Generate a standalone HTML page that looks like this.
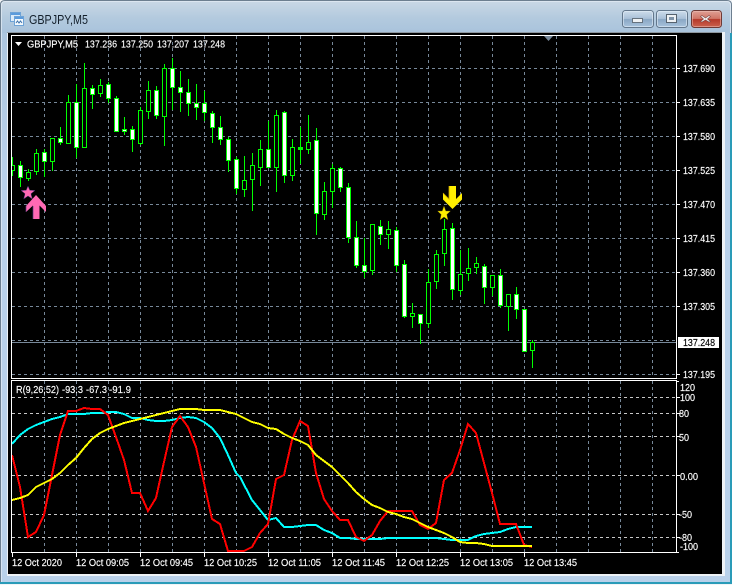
<!DOCTYPE html>
<html lang="en">
<head>
<meta charset="utf-8">
<title>GBPJPY,M5</title>
<style>
html,body{margin:0;padding:0;width:732px;height:585px;overflow:hidden;background:#f2f4f6}
svg{position:absolute;left:0;top:0;display:block}
text{font-family:"Liberation Sans",sans-serif;font-size:10.2px}
</style>
</head>
<body>
<svg width="732" height="585" viewBox="0 0 732 585" xmlns="http://www.w3.org/2000/svg">
<defs>
<linearGradient id="tb" x1="0" y1="0" x2="0" y2="1"><stop offset="0" stop-color="#cbd9e6"/><stop offset=".55" stop-color="#b3cade"/><stop offset="1" stop-color="#a9c3dc"/></linearGradient>
<linearGradient id="side" x1="0" y1="0" x2="0" y2="1"><stop offset="0" stop-color="#a9c3dc"/><stop offset=".3" stop-color="#b9d1ea"/><stop offset="1" stop-color="#b9d1ea"/></linearGradient>
<linearGradient id="btn" x1="0" y1="0" x2="0" y2="1"><stop offset="0" stop-color="#cfdeec"/><stop offset=".48" stop-color="#a9c0d8"/><stop offset=".52" stop-color="#8aa7c4"/><stop offset="1" stop-color="#a9c4de"/></linearGradient>
<linearGradient id="cls" x1="0" y1="0" x2="0" y2="1"><stop offset="0" stop-color="#e0a297"/><stop offset=".48" stop-color="#cf7566"/><stop offset=".52" stop-color="#b5392a"/><stop offset="1" stop-color="#cc6450"/></linearGradient>
<clipPath id="mainc"><rect x="12" y="36" width="664" height="342"/></clipPath>
<clipPath id="subc"><rect x="12" y="381" width="664" height="171"/></clipPath>
</defs>

<!-- window frame -->
<path d="M0 583V5Q0 0 5 0H727Q732 0 732 5V583Z" fill="url(#side)"/>
<path d="M0 33V5Q0 0 5 0H727Q732 0 732 5V33Z" fill="url(#tb)"/>
<path d="M.5 583V5Q.5 .5 5 .5H727Q731.5 .5 731.5 5V583" fill="none" stroke="#6d7f90"/>
<path d="M1.5 583V5Q1.5 1.5 5 1.5H727Q730.5 1.5 730.5 5V583" fill="none" stroke="#e4edf5" stroke-opacity=".7"/>
<rect x="0" y="582" width="732" height="2" fill="#2a9bb8"/>
<rect x="730" y="33" width="2" height="550" fill="#2a9bb8"/>
<rect x="0" y="584" width="732" height="1" fill="#f2f4f6"/>
<rect x="7" y="32" width="718" height="544" fill="#eef2f6"/>
<rect x="7" y="32" width="715" height="1" fill="#8e979f"/>
<rect x="8" y="33" width="714" height="541" fill="#000"/>

<!-- title icon -->
<g shape-rendering="crispEdges">
<rect x="10.5" y="12.5" width="10" height="9" fill="#dcebf9" stroke="#6fa3d6"/>
<rect x="11" y="13" width="9" height="2" fill="#5b9bdc"/>
<rect x="14.5" y="16.5" width="9" height="9" fill="#f4f9fd" stroke="#6fa3d6"/>
<rect x="15" y="17" width="8" height="2" fill="#5b9bdc"/>
</g>
<path d="M16 23l1.500-2 1.500 2 1.500-2 1.500 2" fill="none" stroke="#3f74ad" stroke-width="1"/>
<text x="29" y="24" style="font-size:12.5px" textLength="59" lengthAdjust="spacingAndGlyphs" fill="#14202c">GBPJPY,M5</text>

<!-- window buttons -->
<rect x="622.5" y="10.5" width="31" height="17" rx="3" fill="url(#btn)" stroke="#63778c"/>
<rect x="623.5" y="11.5" width="29" height="15" rx="2" fill="none" stroke="#e3edf6" stroke-opacity=".6"/>
<rect x="632.5" y="18.5" width="10" height="4" fill="#eef1f4" stroke="#66727e"/>
<rect x="656.5" y="10.5" width="31" height="17" rx="3" fill="url(#btn)" stroke="#63778c"/>
<rect x="657.5" y="11.5" width="29" height="15" rx="2" fill="none" stroke="#e3edf6" stroke-opacity=".6"/>
<rect x="666.5" y="14.5" width="10" height="8" fill="#eef1f4" stroke="#56626e"/>
<rect x="669" y="17" width="5" height="3" fill="#7f93a8"/>
<rect x="691.5" y="10.5" width="30" height="17" rx="3" fill="url(#cls)" stroke="#6e3a36"/>
<rect x="692.5" y="11.5" width="28" height="15" rx="2" fill="none" stroke="#f0c4bb" stroke-opacity=".5"/>
<path d="M702 15.500l3.500 2.500 3.500-2.500 1.500 1-3 2.500 3 2.500-1.500 .5-3.500-2-3.500 2-1.500-.5 3-2.500-3-2.500z" fill="#f2f2f2" stroke="#7c4a48" stroke-width=".6"/>

<!-- main grid -->
<g shape-rendering="crispEdges" stroke="#778899" stroke-dasharray="3 3" fill="none">
<path d="M12 68.500H676M12 102.500H676M12 136.500H676M12 170.500H676M12 204.500H676M12 238.500H676M12 272.500H676M12 306.500H676M12 340.500H676M12 374.500H676"/>
<path d="M44.500 36V378M76.500 36V378M108.500 36V378M140.500 36V378M172.500 36V378M204.500 36V378M236.500 36V378M268.500 36V378M300.500 36V378M332.500 36V378M364.500 36V378M396.500 36V378M428.500 36V378M460.500 36V378M492.500 36V378M524.500 36V378M556.500 36V378M588.500 36V378M620.500 36V378M652.500 36V378"/>
</g>
<rect x="12" y="342" width="664" height="1" fill="#778899"/>

<!-- candles -->
<g clip-path="url(#mainc)" shape-rendering="crispEdges" fill="none">
<path stroke="#00ff00" d="M12.500 157V176M20.500 161V187M28.500 169V181M36.500 149V175M44.500 149V177M52.500 138V171M60.500 127V145M68.500 95V143M76.500 84V158M84.500 63V147M92.500 85V109M100.500 79V97M108.500 82V103M116.500 96V132M124.500 117V135M132.500 126V152M140.500 107V145M148.500 81V119M156.500 86V119M164.500 64V146M172.500 58V110M180.500 71V112M188.500 79V116M196.500 84V120M204.500 91V121M212.500 111V143M220.500 116V145M228.500 137V172M236.500 157V194M244.500 156V197M252.500 153V211M260.500 140V186M268.500 121V167M276.500 110V192M284.500 111V183M292.500 139V181M300.500 127V164M308.500 115V154M316.500 128V235M324.500 182V220M332.500 164V208M340.500 167V192M348.500 183V243M356.500 221V268M364.500 238V278M372.500 224V275M380.500 220V245M388.500 221V249M396.500 227V272M404.500 260V318M412.500 303V328M420.500 314V344M428.500 269V328M436.500 250V289M444.500 219V266M452.500 223V300M460.500 250V295M468.500 248V281M476.500 257V274M484.500 264V304M492.500 275V296M500.500 269V308M508.500 294V331M516.500 287V319M524.500 309V351M532.500 340V368"/>
<path stroke="#00ff00" fill="#000" d="M10.500 165.500h4v5h-4zM26.500 172.500h4v6h-4zM34.500 153.500h4v18h-4zM50.500 138.500h4v23h-4zM66.500 102.500h4v41h-4zM82.500 88.500h4v59h-4zM98.500 85.500h4v8h-4zM138.500 110.500h4v33h-4zM146.500 90.500h4v21h-4zM162.500 68.500h4v48h-4zM242.500 180.500h4v9h-4zM250.500 165.500h4v14h-4zM258.500 149.500h4v18h-4zM274.500 115.500h4v52h-4zM290.500 147.500h4v28h-4zM306.500 142.500h4v7h-4zM322.500 191.500h4v23h-4zM330.500 168.500h4v23h-4zM370.500 224.500h4v46h-4zM386.500 229.500h4v5h-4zM410.500 313.500h4v3h-4zM426.500 282.500h4v41h-4zM434.500 254.500h4v27h-4zM442.500 229.500h4v24h-4zM458.500 274.500h4v16h-4zM466.500 268.500h4v5h-4zM474.500 263.500h4v4h-4zM490.500 275.500h4v12h-4zM506.500 294.500h4v12h-4zM530.500 342.500h4v8h-4z"/>
<path stroke="#00ff00" fill="#fff" d="M18.500 165.500h4v12h-4zM42.500 152.500h4v9h-4zM58.500 138.500h4v4h-4zM74.500 102.500h4v45h-4zM90.500 88.500h4v6h-4zM106.500 84.500h4v14h-4zM114.500 98.500h4v33h-4zM122.500 129.500h4v2h-4zM130.500 129.500h4v10h-4zM154.500 90.500h4v25h-4zM170.500 68.500h4v19h-4zM178.500 87.500h4v5h-4zM186.500 92.500h4v11h-4zM194.500 103.500h4v4h-4zM202.500 103.500h4v9h-4zM210.500 113.500h4v14h-4zM218.500 127.500h4v12h-4zM226.500 139.500h4v21h-4zM234.500 159.500h4v29h-4zM266.500 149.500h4v18h-4zM282.500 112.500h4v63h-4zM314.500 140.500h4v73h-4zM338.500 168.500h4v19h-4zM346.500 187.500h4v50h-4zM354.500 237.500h4v28h-4zM362.500 265.500h4v6h-4zM378.500 226.500h4v8h-4zM394.500 230.500h4v35h-4zM402.500 264.500h4v52h-4zM418.500 314.500h4v9h-4zM450.500 228.500h4v61h-4zM482.500 266.500h4v21h-4zM498.500 275.500h4v30h-4zM514.500 294.500h4v15h-4zM522.500 309.500h4v42h-4z"/>
<path stroke="#00ff00" fill="#00ff00" d="M298.500 147.500h4v2h-4z"/>
</g>

<!-- markers -->
<polygon points="28,186 29.800,190.200 35,190.500 31,193.700 32.300,199 28,196 23.700,199 25,193.700 21,190.500 26.200,190.200" fill="#ff69b4" stroke="#3a2a70" stroke-width=".5"/>
<polygon points="36,195 46,206 46,212 39.500,205.500 39.500,219 33,219 33,205.500 26,212 26,206" fill="#ff69b4"/>
<path d="M26 206V212M33 206V219" stroke="#5a3a80" stroke-width=".7" fill="none"/>
<polygon points="444,206 445.800,211 450.500,211 446.800,214.500 448,220 444,217 440,220 441.200,214.500 437.500,211 442.200,211" fill="#ffee00" stroke="#6b5c00" stroke-width=".4"/>
<polygon points="449,186 456,186 456,199 462,193 462,199.500 452.500,209 443,199.500 443,193 449,199" fill="#ffee00"/>
<path d="M449 186V199L443 193" fill="none" stroke="#c8a000" stroke-width=".8"/>
<polygon points="544,36 553,36 548.500,41" fill="#778899"/>

<!-- sub grid -->
<g shape-rendering="crispEdges" fill="none" stroke-dasharray="3 3">
<path stroke="#778899" d="M44.500 381V552M76.500 381V552M108.500 381V552M140.500 381V552M172.500 381V552M204.500 381V552M236.500 381V552M268.500 381V552M300.500 381V552M332.500 381V552M364.500 381V552M396.500 381V552M428.500 381V552M460.500 381V552M492.500 381V552M524.500 381V552M556.500 381V552M588.500 381V552M620.500 381V552M652.500 381V552"/>
<path stroke="#c8c8c8" d="M12 397.500H676M12 413.500H676M12 436.500H676M12 475.500H676M12 514.500H676M12 537.500H676"/>
</g>

<!-- indicator lines -->
<g clip-path="url(#subc)" fill="none" stroke-width="2" shape-rendering="crispEdges" stroke-linejoin="miter">
<polyline stroke="#00ffff" points="12,444 20,435 28,429 36,425 44,422 52,419 60,417 68,414 76,414 84,414 92,413 100,413 108,412 116,412 124,414 132,418 140,418 148,420 156,421 164,421 172,420 180,418 188,417 196,418 204,422 212,428 220,438 228,455 236,473 240,477 252,500 260,510 268,520 276,518 284,527 292,527 300,526 308,525 316,525 324,530 332,533 340,538 348,538 356,539 364,539 372,539 380,539 388,538 396,538 404,538 412,538 420,538 428,538 436,538 444,539 452,540 460,540 468,540 476,536 484,534 492,533 500,532 508,529 516,527 524,527 532,527"/>
<polyline stroke="#ff0000" points="12,455 20,487 28,537 36,532 44,515 52,475 60,435 68,411 76,411 84,408 92,409 100,409 108,415 116,437 124,460 132,493 140,493 148,511 156,498 164,462 172,427 180,416 188,427 196,447 204,483 212,519 220,524 228,551 236,551 244,551 252,547 260,533 268,524 276,479 284,475 292,440 300,421 308,426 316,473 324,499 332,511 340,520 348,520 356,537 364,541 372,535 380,521 388,511 396,511 404,511 412,511 420,525 428,529 436,523 444,480 452,473 460,450 468,424 476,433 484,463 492,493 500,524 508,524 516,524 524,545 532,547"/>
<polyline stroke="#ffff00" points="12,500 20,498 28,495 36,487 44,483 52,479 60,473 68,465 76,458 84,448 92,439 100,433 108,429 116,426 124,423 132,421 140,419 148,417 156,415 164,413 172,411 180,409 188,409 196,409 204,410 212,410 220,410 228,412 236,414 244,418 252,422 260,424 268,428 276,429 284,434 292,438 300,441 308,445 316,455 324,461 332,467 340,475 348,483 356,492 364,499 372,505 380,508 388,512 396,514 404,517 412,519 420,523 428,527 436,530 444,533 452,537 460,542 468,543 476,543 484,544 492,546 500,546 508,546 516,546 524,546 532,546"/>
</g>

<!-- frames and ticks -->
<g shape-rendering="crispEdges" fill="none" stroke="#fff">
<path d="M11.500 35.500H676.500V378.500H11.500Z"/>
<path d="M11.500 380.500H676.500V552.500H11.500Z"/>
<path d="M677 68.500H680M677 102.500H680M677 136.500H680M677 170.500H680M677 204.500H680M677 238.500H680M677 272.500H680M677 306.500H680M677 374.500H680"/>
<path d="M677 381.500H679M677 397.500H680M677 413.500H680M677 436.500H680M677 475.500H680M677 514.500H680M677 537.500H680M677 552.500H679"/>
<path d="M12.500 553V557M76.500 553V557M140.500 553V557M204.500 553V557M268.500 553V557M332.500 553V557M396.500 553V557M460.500 553V557M524.500 553V557"/>
</g>

<!-- header -->
<polygon points="15,42 22,42 18.500,46" fill="#fff"/>
<g fill="#fff" stroke="#fff" stroke-width=".15">
<text x="27" y="47.500" textLength="51" lengthAdjust="spacingAndGlyphs">GBPJPY,M5</text>
<text x="85" y="47.500" textLength="32" lengthAdjust="spacingAndGlyphs">137.236</text>
<text x="121" y="47.500" textLength="32" lengthAdjust="spacingAndGlyphs">137.250</text>
<text x="157" y="47.500" textLength="32" lengthAdjust="spacingAndGlyphs">137.207</text>
<text x="193" y="47.500" textLength="32" lengthAdjust="spacingAndGlyphs">137.248</text>
<!-- price axis -->
<text x="683" y="72" textLength="32" lengthAdjust="spacingAndGlyphs">137.690</text>
<text x="683" y="106" textLength="32" lengthAdjust="spacingAndGlyphs">137.635</text>
<text x="683" y="140" textLength="32" lengthAdjust="spacingAndGlyphs">137.580</text>
<text x="683" y="174" textLength="32" lengthAdjust="spacingAndGlyphs">137.525</text>
<text x="683" y="208" textLength="32" lengthAdjust="spacingAndGlyphs">137.470</text>
<text x="683" y="242" textLength="32" lengthAdjust="spacingAndGlyphs">137.415</text>
<text x="683" y="276" textLength="32" lengthAdjust="spacingAndGlyphs">137.360</text>
<text x="683" y="310" textLength="32" lengthAdjust="spacingAndGlyphs">137.305</text>
<text x="683" y="378" textLength="32" lengthAdjust="spacingAndGlyphs">137.195</text>
</g>
<rect x="678" y="337" width="41" height="11" fill="#fff"/>
<text x="683" y="346" textLength="32" lengthAdjust="spacingAndGlyphs" fill="#000" stroke="#000" stroke-width=".15">137.248</text>

<!-- indicator labels -->
<g fill="#fff" stroke="#fff" stroke-width=".15">
<text x="16" y="393" textLength="43" lengthAdjust="spacingAndGlyphs">R(9,26,52)</text>
<text x="62" y="393" textLength="21" lengthAdjust="spacingAndGlyphs">-93.3</text>
<text x="86" y="393" textLength="21" lengthAdjust="spacingAndGlyphs">-67.3</text>
<text x="109" y="393" textLength="22" lengthAdjust="spacingAndGlyphs">-91.9</text>
<text x="680" y="391" textLength="15" lengthAdjust="spacingAndGlyphs">120</text>
<text x="680" y="401" textLength="15" lengthAdjust="spacingAndGlyphs">100</text>
<text x="679" y="417" textLength="10" lengthAdjust="spacingAndGlyphs">80</text>
<text x="679" y="441" textLength="10" lengthAdjust="spacingAndGlyphs">50</text>
<text x="680" y="480" textLength="18" lengthAdjust="spacingAndGlyphs">0.00</text>
<text x="679" y="518" textLength="13" lengthAdjust="spacingAndGlyphs">-50</text>
<text x="679" y="541" textLength="13" lengthAdjust="spacingAndGlyphs">-80</text>
<text x="680" y="550" textLength="18" lengthAdjust="spacingAndGlyphs">-100</text>
<!-- time axis -->
<text x="12" y="566" textLength="50" lengthAdjust="spacingAndGlyphs">12 Oct 2020</text>
<text x="76" y="566" textLength="53" lengthAdjust="spacingAndGlyphs">12 Oct 09:05</text>
<text x="140" y="566" textLength="53" lengthAdjust="spacingAndGlyphs">12 Oct 09:45</text>
<text x="204" y="566" textLength="53" lengthAdjust="spacingAndGlyphs">12 Oct 10:25</text>
<text x="268" y="566" textLength="53" lengthAdjust="spacingAndGlyphs">12 Oct 11:05</text>
<text x="332" y="566" textLength="53" lengthAdjust="spacingAndGlyphs">12 Oct 11:45</text>
<text x="396" y="566" textLength="53" lengthAdjust="spacingAndGlyphs">12 Oct 12:25</text>
<text x="460" y="566" textLength="53" lengthAdjust="spacingAndGlyphs">12 Oct 13:05</text>
<text x="524" y="566" textLength="53" lengthAdjust="spacingAndGlyphs">12 Oct 13:45</text>
</g>
</svg>
</body>
</html>
